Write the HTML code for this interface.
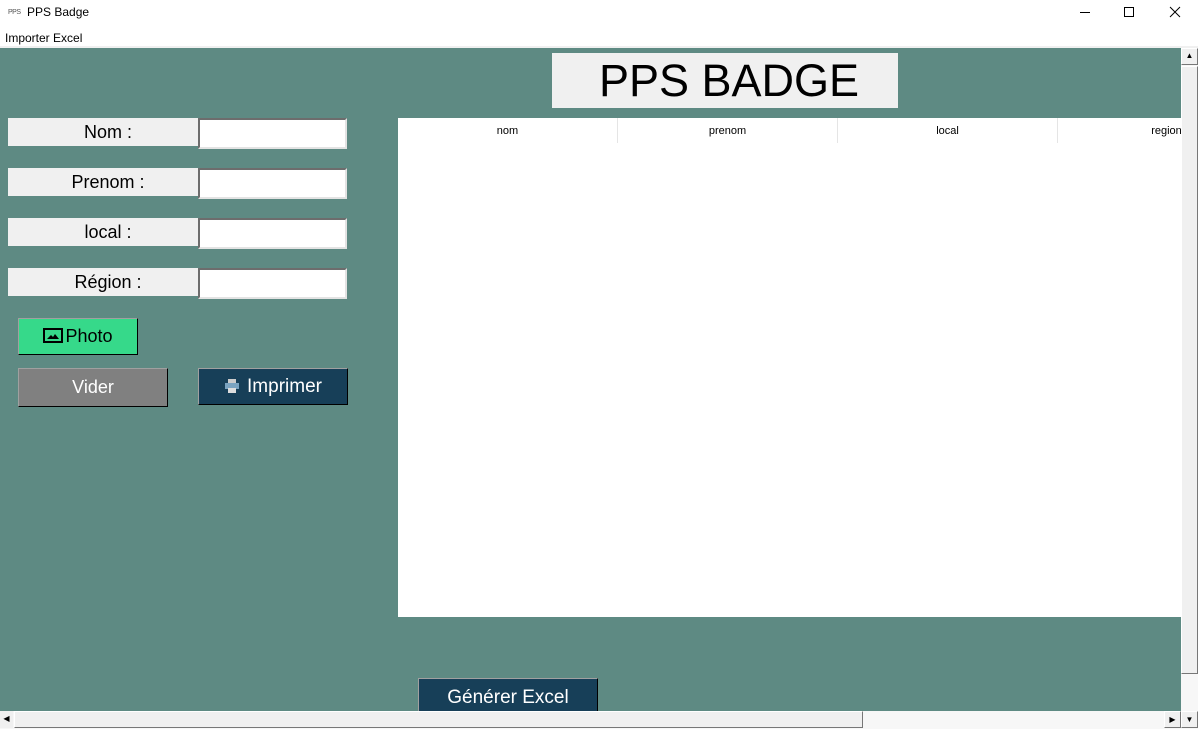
<!DOCTYPE html>
<html><head><meta charset="utf-8"><style>
*{margin:0;padding:0;box-sizing:border-box}
body{width:1198px;height:729px;position:relative;overflow:hidden;background:#fff;font-family:"Liberation Sans",sans-serif}
.a{position:absolute}
.lbl{background:#f0f0f0;font-size:18px;text-align:center;line-height:28px;color:#000}
.fl{padding-left:10px}
.inp{background:#fff;border:2px solid;border-color:#6d6d6d #e3e3e3 #e3e3e3 #6d6d6d}
.btn{font-size:18px;text-align:center;color:#fff;border:1px solid;border-color:#a0a0a0 #000 #000 #a0a0a0}
.th{top:0;height:25px;font-size:11px;line-height:27px;text-align:center;border-right:1px solid #e5e5e5;width:220px}
</style></head><body>
<div class="a" style="left:8px;top:9px;font-size:7px;color:#555;letter-spacing:-0.5px">PPS</div>
<div class="a" style="left:27px;top:5px;font-size:12px">PPS Badge</div>
<div class="a" style="left:1080px;top:12px;width:10px;height:1px;background:#000"></div>
<div class="a" style="left:1124px;top:7px;width:10px;height:10px;border:1px solid #000"></div>
<svg class="a" style="left:1169px;top:6px" width="12" height="12"><path d="M1 1L11 11M11 1L1 11" stroke="#000" stroke-width="1"/></svg>
<div class="a" style="left:5px;top:31px;font-size:12px">Importer Excel</div>
<div class="a" style="left:0;top:46px;width:1198px;height:2px;background:#f0f0f0"></div>
<div class="a" style="left:0;top:48px;width:1181px;height:663px;background:#5e8a83"></div>
<div class="a lbl" style="left:552px;top:53px;width:346px;height:55px;font-size:45px;line-height:55px;padding-left:8px">PPS BADGE</div>

<div class="a lbl fl" style="left:8px;top:118px;width:190px;height:28px">Nom :</div>
<div class="a inp" style="left:198px;top:118px;width:149px;height:31px"></div>
<div class="a lbl fl" style="left:8px;top:168px;width:190px;height:28px">Prenom :</div>
<div class="a inp" style="left:198px;top:168px;width:149px;height:31px"></div>
<div class="a lbl fl" style="left:8px;top:218px;width:190px;height:28px">local :</div>
<div class="a inp" style="left:198px;top:218px;width:149px;height:31px"></div>
<div class="a lbl fl" style="left:8px;top:268px;width:190px;height:28px">Région :</div>
<div class="a inp" style="left:198px;top:268px;width:149px;height:31px"></div>

<div class="a btn" style="left:18px;top:318px;width:120px;height:37px;background:#36d98a;color:#000;line-height:35px"><svg width="20" height="15" style="vertical-align:-1px;margin-right:2px"><rect x="1" y="1" width="18" height="13" fill="none" stroke="#000" stroke-width="2"/><path d="M4 11L8 7L10 9L12 6L16 11Z" fill="#000"/></svg>Photo</div>
<div class="a btn" style="left:18px;top:368px;width:150px;height:39px;background:#808080;line-height:37px">Vider</div>
<div class="a btn" style="left:198px;top:368px;width:150px;height:37px;background:#173f58;line-height:35px;font-size:19px"><svg width="16" height="14" style="vertical-align:-1px;margin-right:7px"><rect x="4" y="0" width="8" height="4" fill="#ccc"/><rect x="1" y="4" width="14" height="6" fill="#7aa3c0"/><rect x="4" y="9" width="8" height="5" fill="#ddd"/></svg>Imprimer</div>

<div class="a" style="left:398px;top:118px;width:783px;height:499px;background:#fff;overflow:hidden">
<div class="a th" style="left:0">nom</div>
<div class="a th" style="left:220px">prenom</div>
<div class="a th" style="left:440px">local</div>
<div class="a th" style="left:659px">region</div>
</div>

<div class="a btn" style="left:418px;top:678px;width:180px;height:40px;background:#173f58;line-height:38px;font-size:19px">Générer Excel</div>

<div class="a" style="left:1181px;top:48px;width:17px;height:663px;background:#f7f7f7"></div>
<div class="a" style="left:1181px;top:48px;width:17px;height:17px;background:#f0f0f0;border:1px solid;border-color:#fff #777 #777 #fff;font-size:8px;text-align:center;line-height:14px">▲</div>
<div class="a" style="left:1181px;top:66px;width:17px;height:608px;background:#f0f0f0;border:1px solid;border-color:#fff #777 #777 #fff"></div>
<div class="a" style="left:0;top:711px;width:1198px;height:18px;background:#f7f7f7"></div>
<div class="a" style="left:0;top:711px;width:13px;height:17px;background:#f0f0f0;font-size:8px;line-height:16px;text-align:center">◀</div>
<div class="a" style="left:14px;top:711px;width:849px;height:17px;background:#f0f0f0;border:1px solid;border-color:#fff #777 #777 #fff"></div>
<div class="a" style="left:1164px;top:711px;width:17px;height:17px;background:#f0f0f0;border:1px solid;border-color:#fff #777 #777 #fff;font-size:8px;line-height:15px;text-align:center">▶</div>
<div class="a" style="left:1181px;top:711px;width:17px;height:17px;background:#f0f0f0;border:1px solid;border-color:#fff #777 #777 #fff;font-size:8px;line-height:15px;text-align:center">▼</div>
</body></html>
